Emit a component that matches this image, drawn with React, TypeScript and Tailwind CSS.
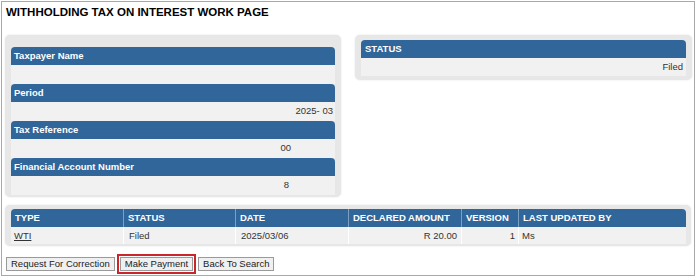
import React from 'react';

const FONT = { fontFamily: '"Liberation Sans", Arial, sans-serif' };

// left-hand detail blocks: label + value (value padded right to match the page)
const DETAILS: { label: string; value: string; pad: string }[] = [
  { label: 'Taxpayer Name', value: '', pad: 'pr-[2px]' },
  { label: 'Period', value: '2025- 03', pad: 'pr-[2px]' },
  { label: 'Tax Reference', value: '00', pad: 'pr-[44px]' },
  { label: 'Financial Account Number', value: '8', pad: 'pr-[46px]' },
];

const COLS = [
  { name: 'TYPE', w: 'w-[112px]' },
  { name: 'STATUS', w: 'w-[112px]' },
  { name: 'DATE', w: 'w-[113px]' },
  { name: 'DECLARED AMOUNT', w: 'w-[113px]' },
  { name: 'VERSION', w: 'w-[57px]' },
  { name: 'LAST UPDATED BY', w: 'w-[168px]' },
];

function Header({ children }: { children: React.ReactNode }) {
  return (
    <div className="h-[18px] rounded-t-[4px] bg-[#30669a] px-[3px] flex items-center text-[9.5px] font-bold text-white leading-none">
      {children}
    </div>
  );
}

function Button({ children }: { children: React.ReactNode }) {
  return (
    <button className="h-[14px] px-[4px] border border-[#9a9a9a] bg-[#f0f0f0] text-[9.5px] leading-none text-[#222] flex items-center">
      {children}
    </button>
  );
}

export default function App() {
  return (
    <div className="w-[696px] h-[277px] bg-white pt-[1px] pl-[1px]" style={FONT}>
      <div className="w-[694px] h-[275px] border border-[#a8a8a8] flex flex-col">
        {/* Title */}
        <div className="pl-[4px] pt-[2px] h-[16px] text-[11.5px] font-bold text-black leading-[16px]">
          WITHHOLDING TAX ON INTEREST WORK PAGE
        </div>

        {/* Detail panels */}
        <div className="flex items-start gap-[14px] pl-[3px] mt-[17px]">
          <div className="w-[336px] h-[162px] rounded-[5px] bg-[#e7e7e7] shadow-[0_0_2px_rgba(0,0,0,0.12)] px-[6px] pt-[12px]">
            {DETAILS.map((d) => (
              <div key={d.label}>
                <Header>{d.label}</Header>
                <div className={`h-[19px] bg-[#f1f1f1] flex items-center justify-end text-[9.5px] text-[#333] ${d.pad}`}>
                  {d.value}
                </div>
              </div>
            ))}
          </div>

          <div className="w-[337px] h-[45px] rounded-[5px] bg-[#e7e7e7] shadow-[0_0_2px_rgba(0,0,0,0.12)] px-[6px] pt-[5px]">
            <Header>
              <span className="pl-[1px]">STATUS</span>
            </Header>
            <div className="h-[18px] bg-[#f1f1f1] flex items-center justify-end pr-[3px] text-[9.5px] text-[#333]">
              Filed
            </div>
          </div>
        </div>

        {/* History table */}
        <div className="ml-[3px] mt-[8px] w-[686px] h-[41px] rounded-[5px] bg-[#e7e7e7] shadow-[0_0_2px_rgba(0,0,0,0.12)] pl-[6px] pr-[5px] pt-[4px]">
          <div className="flex h-[18px] rounded-t-[4px] bg-[#30669a] overflow-hidden">
            {COLS.map((c, i) => (
              <div
                key={c.name}
                className={`${c.w} h-full flex items-center pl-[4px] text-[9.5px] font-bold text-white leading-none ${i > 0 ? 'border-l border-[#7d9fc4]' : ''}`}
              >
                {c.name}
              </div>
            ))}
          </div>
          <div className="flex h-[17px] bg-[#f1f1f1] text-[9.5px] text-[#333] leading-none">
            <div className="w-[112px] flex items-center pl-[3px]">
              <span className="underline">WTI</span>
            </div>
            <div className="w-[112px] flex items-center pl-[5px] border-l border-white">Filed</div>
            <div className="w-[113px] flex items-center pl-[5px] border-l border-white">2025/03/06</div>
            <div className="w-[113px] flex items-center justify-end pr-[4px] border-l border-white">R 20.00</div>
            <div className="w-[57px] flex items-center justify-end pr-[3px] border-l border-white">1</div>
            <div className="w-[168px] flex items-center pl-[3px] border-l border-white">Ms</div>
          </div>
        </div>

        {/* Actions */}
        <div className="flex items-center gap-[2px] pl-[4px] mt-[8px]">
          <Button>Request For Correction</Button>
          <div className="border-2 border-[#c8262b] p-[1px]">
            <Button>Make Payment</Button>
          </div>
          <Button>Back To Search</Button>
        </div>
      </div>
    </div>
  );
}
